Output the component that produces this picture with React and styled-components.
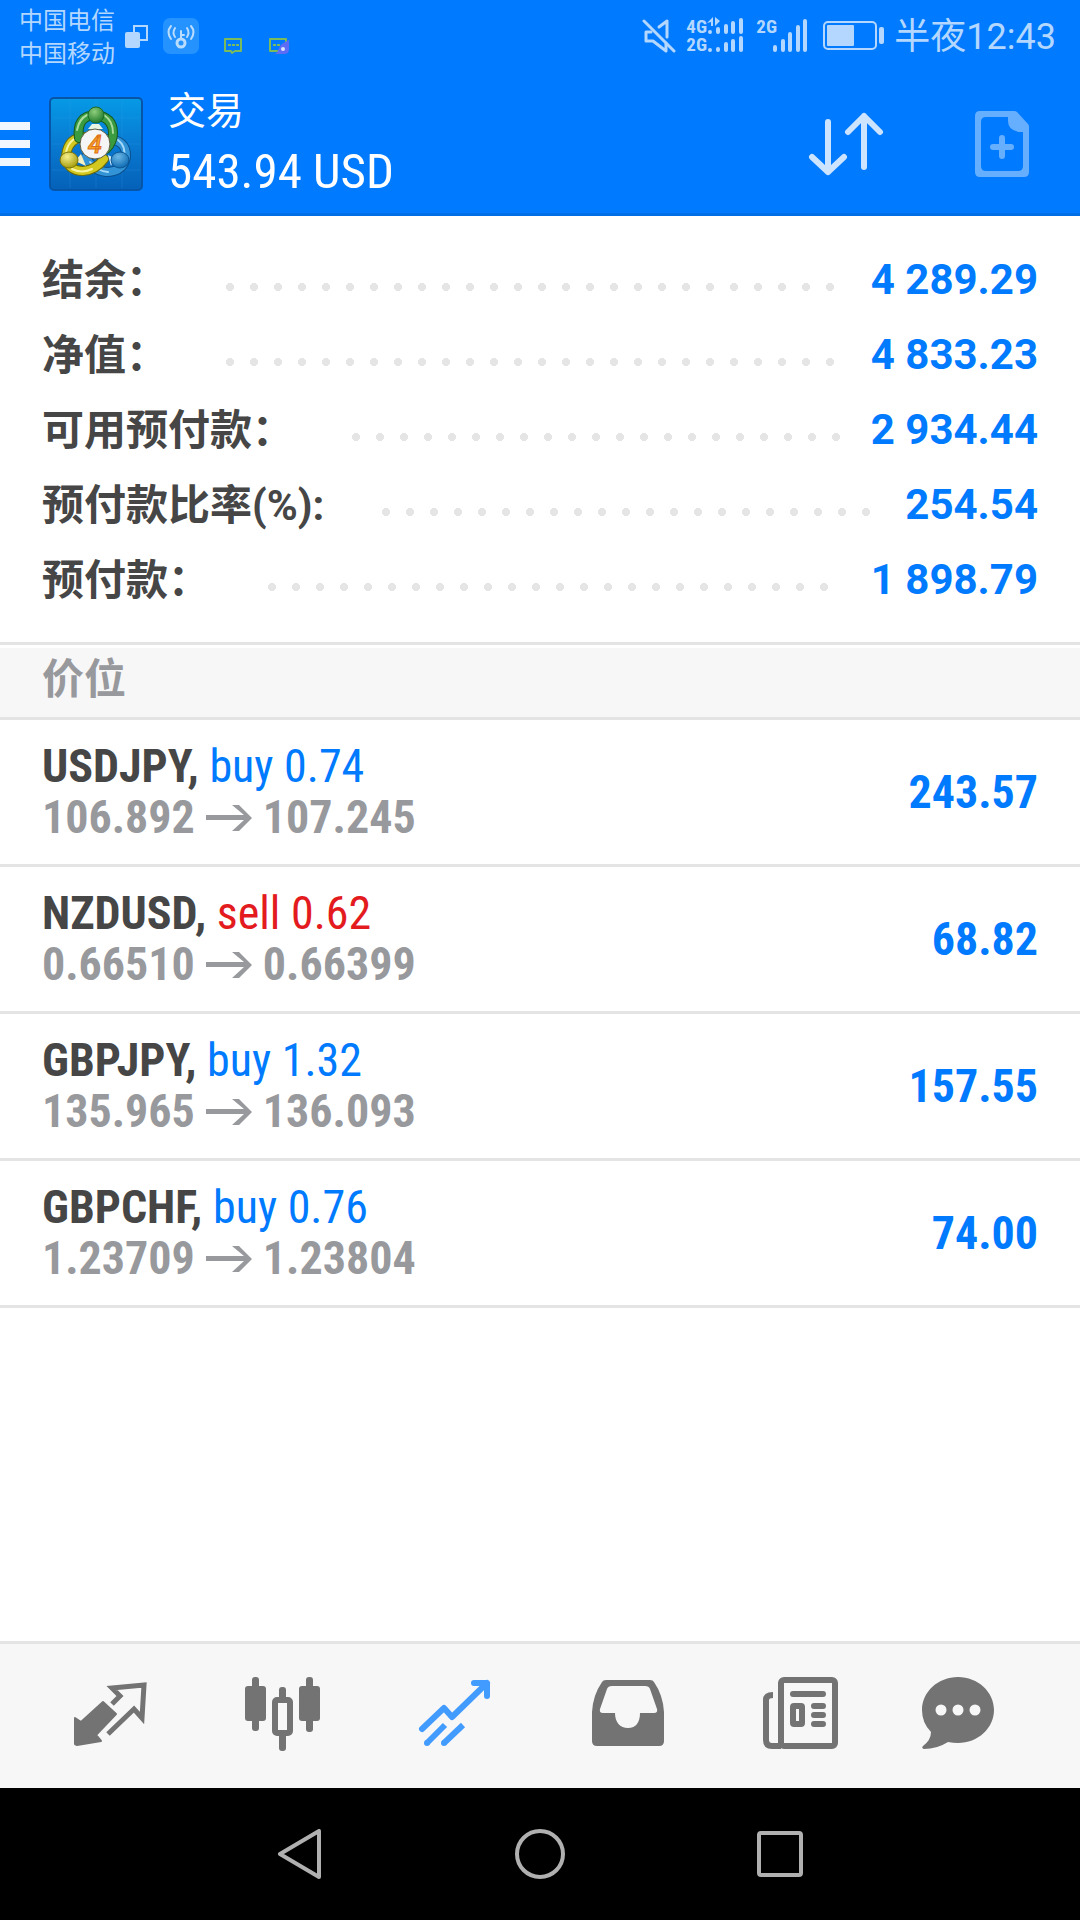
import styled, { createGlobalStyle } from "styled-components";

const GlobalStyle = createGlobalStyle`
  * {
    box-sizing: border-box;
  }

  body {
    margin: 0;
    background: #fff;
    font-family: Roboto, "Noto Sans CJK SC", sans-serif;
  }

  button {
    border: 0;
    padding: 0;
    background: none;
    font: inherit;
    color: inherit;
    cursor: pointer;
  }

  svg {
    display: block;
    flex: none;
  }
`;

const condensed = `"Roboto Condensed", "Liberation Sans Narrow", Roboto, "Noto Sans CJK SC", sans-serif`;

const Screen = styled.div`
  min-height: 100vh;
  display: flex;
  flex-direction: column;
`;

const TopArea = styled.header`
  background: #007aff;
  border-bottom: 3px solid #006ee6;
`;

const StatusBar = styled.div`
  height: 72px;
  display: flex;
  align-items: flex-start;
  justify-content: space-between;
  padding: 4px 24px 0 19px;
  color: #b3d7ff;
`;

const StatusGroup = styled.div`
  display: flex;
  align-items: flex-start;
`;

const Carriers = styled.div`
  margin-right: 8px;
  padding-top: 1px;
  font-size: 24px;
  line-height: 33px;
`;

const Network = styled.div`
  width: 21px;
  padding-top: 14px;
  font-family: ${condensed};
  font-size: 19px;
  font-weight: 700;
  line-height: 18px;
`;

const Clock = styled.time`
  margin-left: 10px;
  font-size: 36px;
  line-height: 67px;
`;

const Toolbar = styled.div`
  height: 141px;
  display: flex;
  align-items: center;
  padding-top: 2px;
`;

const MenuButton = styled.button`
  margin-right: 19px;
`;

const Heading = styled.div`
  flex: 1;
  margin-left: 25px;
  color: #fff;
`;

const Title = styled.h1`
  margin: 0;
  font-size: 38px;
  font-weight: 400;
  line-height: 56px;
`;

const Profit = styled.div`
  font-family: ${condensed};
  font-size: 49px;
  line-height: 66px;
`;

const ActionButton = styled.button`
  width: 156px;
  height: 100%;
  display: flex;
  align-items: center;
  justify-content: center;
`;

const Main = styled.main`
  flex: 1;
`;

const Summary = styled.dl`
  margin: 0;
  padding: 27px 42px 24px;
  border-bottom: 3px solid #e4e4e4;
`;

const SummaryRow = styled.div`
  height: 75px;
  display: flex;
  align-items: center;
  font-size: 42px;
  font-weight: 700;
  line-height: 60px;
`;

const Label = styled.dt`
  color: #464646;
`;

const Dots = styled.span`
  flex: 1;
  height: 8px;
  margin: 12px 29px 0 58px;
  background: radial-gradient(circle at 4px 4px, #e5e5e5 4px, transparent 4px) 0 0 / 24px 8px repeat-x;
`;

const Amount = styled.dd`
  margin: 0;
  padding-bottom: 2px;
  color: #007aff;
`;

const SectionTitle = styled.h2`
  margin: 3px 0 0;
  padding: 2px 42px 7px;
  background: #f7f7f7;
  border-bottom: 3px solid #e4e4e4;
  color: #98999d;
  font-size: 42px;
  font-weight: 700;
  line-height: 60px;
`;

const Positions = styled.ul`
  margin: 0;
  padding: 0;
  list-style: none;
  font-family: ${condensed};
  font-size: 46px;
  font-weight: 700;
  line-height: 51px;
`;

const Position = styled.li`
  height: 147px;
  display: flex;
  align-items: center;
  justify-content: space-between;
  padding: 0 42px;
  border-bottom: 3px solid #e4e4e4;
`;

const Instrument = styled.div`
  color: #464646;
`;

const Side = styled.span`
  font-weight: 400;
  color: ${(props) => (props.$side === "sell" ? "#e31b1e" : "#007aff")};
`;

const Prices = styled.div`
  display: flex;
  align-items: center;
  gap: 11px;
  color: #98999d;
`;

const Result = styled.div`
  color: #007aff;
`;

const TabBar = styled.nav`
  height: 147px;
  display: flex;
  padding: 0 50px 0 24px;
  background: #f7f7f7;
  border-top: 3px solid #e4e4e4;
`;

const Tab = styled.button`
  flex: ${(props) => (props.$last ? 5 : 6)};
  display: flex;
  align-items: center;
  justify-content: center;
  color: ${(props) => (props.$active ? "#429bff" : "#737373")};
`;

const SystemBar = styled.nav`
  height: 132px;
  display: flex;
  justify-content: center;
  background: #000;
  color: #b0b0b0;
`;

const SystemButton = styled.button`
  width: 240px;
  display: flex;
  align-items: center;
  justify-content: center;
`;

const summary = [
  { label: "结余：", value: "4 289.29" },
  { label: "净值：", value: "4 833.23" },
  { label: "可用预付款：", value: "2 934.44" },
  { label: "预付款比率(%):", value: "254.54" },
  { label: "预付款：", value: "1 898.79" },
];

const positions = [
  { symbol: "USDJPY", side: "buy", volume: "0.74", open: "106.892", current: "107.245", result: "243.57" },
  { symbol: "NZDUSD", side: "sell", volume: "0.62", open: "0.66510", current: "0.66399", result: "68.82" },
  { symbol: "GBPJPY", side: "buy", volume: "1.32", open: "135.965", current: "136.093", result: "157.55" },
  { symbol: "GBPCHF", side: "buy", volume: "0.76", open: "1.23709", current: "1.23804", result: "74.00" },
];

const NotificationIcons = () => (
  <svg width="168" height="64" viewBox="123 4 168 64">
    <path d="M134 32V26h13v14h-7" fill="none" stroke="#b3d7ff" strokeWidth="2" />
    <rect x="125" y="32" width="15" height="16" rx="2" fill="#b3d7ff" />
    <rect x="163" y="18" width="36" height="36" rx="7" fill="#2492ff" />
    <g fill="none" stroke="#b9dcff" strokeWidth="2" strokeLinecap="round">
      <circle cx="181" cy="43" r="4" strokeWidth="3" />
      <path d="M181 39V31M181 35h3" />
      <path d="M175 28q-3 5 0 9M187 28q3 5 0 9M171 26q-5 6 0 13M191 26q5 6 0 13" />
    </g>
    <g fill="none" stroke="#7abb5e" strokeWidth="2" strokeLinejoin="round">
      <path d="M225 39h16v12h-6l-3 2-1-2h-6z" />
      <path d="M270 39h16v12h-16z" />
      <path d="M228 45h11M273 45h8" strokeDasharray="3 1" />
    </g>
    <path d="M289 40V49q0 5-5 5h-9q3-2 4-6t10-8z" fill="#5c6cf5" />
    <circle cx="283" cy="49" r="2" fill="#dbe4ff" />
  </svg>
);

const MuteIcon = () => (
  <svg width="44" height="64" viewBox="643 4 44 64">
    <g fill="none" stroke="#b3d7ff" strokeWidth="3" strokeLinecap="round" strokeLinejoin="round">
      <path d="M645 21l30 30" />
      <path d="M652 32h-5v9h7l13 10v-8" />
      <path d="M660 27l8-6v16" />
    </g>
  </svg>
);

const DualSignalIcon = () => (
  <svg width="49" height="64" viewBox="708 4 49 64" fill="none" stroke="#b3d7ff" strokeWidth="4" strokeLinecap="round">
    <path d="M711 32v0M719 29v3M727 26v6M734 23v9M742 20v12M711 50v0M719 49v1M727 44v6M734 41v9M742 38v12" />
    <path d="M708 23l6-6v9h-2v-4zM716 17v9l5-5z" fill="#b3d7ff" stroke="none" />
  </svg>
);

const SignalIcon = () => (
  <svg width="46" height="64" viewBox="778 4 46 64" fill="none" stroke="#b3d7ff" strokeWidth="4" strokeLinecap="round" overflow="visible">
    <path d="M776 47v3M784 41v9M791 34v16M799 27v23M806 21v29" />
  </svg>
);

const BatteryIcon = () => (
  <svg width="61" height="64" viewBox="824 4 61 64">
    <rect x="825" y="22" width="52" height="27" rx="4" fill="none" stroke="#b3d7ff" strokeWidth="2" />
    <rect x="828" y="25" width="27" height="21" rx="1" fill="#b3d7ff" />
    <rect x="880" y="27" width="5" height="17" rx="2" fill="#b3d7ff" />
  </svg>
);

const MenuIcon = () => (
  <svg width="30" height="44" viewBox="0 0 30 44">
    <path d="M0 0h30v8H0zM0 18h30v8H0zM0 36h30v8H0z" fill="#f0f7ff" />
  </svg>
);

const AppLogo = () => (
  <svg width="94" height="94" viewBox="-1 -1 94 94">
    <defs>
      <linearGradient id="tile" x1="0" y1="0" x2="0" y2="1">
        <stop offset="0" stopColor="#069ae6" />
        <stop offset="0.55" stopColor="#0877cf" />
        <stop offset="1" stopColor="#0561b8" />
      </linearGradient>
      <radialGradient id="green" cx="0.4" cy="0.3" r="0.7">
        <stop offset="0" stopColor="#8fce7c" />
        <stop offset="1" stopColor="#217c2c" />
      </radialGradient>
      <radialGradient id="yellow" cx="0.4" cy="0.3" r="0.7">
        <stop offset="0" stopColor="#f6f08c" />
        <stop offset="1" stopColor="#a79d0e" />
      </radialGradient>
      <radialGradient id="blue" cx="0.4" cy="0.3" r="0.7">
        <stop offset="0" stopColor="#6cb8e6" />
        <stop offset="1" stopColor="#0f6cb4" />
      </radialGradient>
    </defs>
    <rect x="0" y="0" width="92" height="92" rx="4" fill="url(#tile)" stroke="#0655a8" strokeWidth="2" />
    <path d="M20 2v88M46 2v88M72 2v88M2 20h88M2 46h88M2 72h88" stroke="#3aa5ec" strokeOpacity="0.2" />
    <g fill="none" strokeLinecap="round">
      <path d="M55 41q22 0 21 18-3 15-20 15-15-2-20-15" stroke="#0a4f8c" strokeWidth="10" />
      <path d="M55 41q22 0 21 18-3 15-20 15-15-2-20-15" stroke="#3293d6" strokeWidth="8" />
      <path d="M68 42q8 6 6 17M40 64q7 9 18 10" stroke="#a4daf8" strokeWidth="2" />
      <path d="M36 39q-18 0-20 19 2 15 17 15 13-1 21-12" stroke="#6b6a0c" strokeWidth="10" />
      <path d="M36 39q-18 0-20 19 2 15 17 15 13-1 21-12" stroke="#d3c81f" strokeWidth="8" />
      <path d="M32 38q-14 3-16 17M22 71q10 5 20 0" stroke="#f8f3a0" strokeWidth="2" />
      <path d="M29 40q-3-22 16-23 18 2 18 18 0 9-7 16" stroke="#155a1e" strokeWidth="10" />
      <path d="M29 40q-3-22 16-23 18 2 18 18 0 9-7 16" stroke="#3b9b40" strokeWidth="8" />
      <path d="M27 32q2-11 10-15M54 17q9 6 9 18" stroke="#a9dc9c" strokeWidth="2" />
    </g>
    <path d="M38 31l4-5h7l4 5z" fill="#e8f5e2" />
    <path d="M25 63l6-7 5 12z" fill="#f3f0c4" />
    <path d="M58 57l6 3-3 8z" fill="#d7effc" />
    <circle cx="46" cy="17" r="8" fill="url(#green)" stroke="#1c6b26" />
    <ellipse cx="19" cy="62" rx="9" ry="8" fill="url(#yellow)" stroke="#79740f" />
    <ellipse cx="70" cy="62" rx="9" ry="8" fill="url(#blue)" stroke="#0d5592" />
    <circle cx="45" cy="46" r="15" fill="#f5f5f5" stroke="#5d5d40" />
    <text x="45" y="55" textAnchor="middle" fontFamily="Roboto, sans-serif" fontSize="25" fontStyle="italic" fontWeight="500" fill="#f5a623" stroke="#e0701c">4</text>
  </svg>
);

const SortIcon = () => (
  <svg width="76" height="64" viewBox="0 0 76 64" fill="none" stroke="#cce4ff" strokeWidth="6" strokeLinecap="round" strokeLinejoin="round">
    <path d="M20 10v50M4 45l16 15 16-15" />
    <path d="M56 55V4M40 20L56 4l16 16" />
  </svg>
);

const NewOrderIcon = () => (
  <svg width="54" height="66" viewBox="0 0 54 66">
    <path
      fill="#66afff"
      fillRule="evenodd"
      d="M5 0h34q2 0 3 1l11 12q1 1 1 3v45q0 5-5 5H5q-5 0-5-5V5q0-5 5-5zM11 6q-5 0-5 5v44q0 5 5 5h32q5 0 5-5V21h-4Q33 19 33 10V6z"
    />
    <path d="M27 27v18M18 36h18" stroke="#66afff" strokeWidth="6" strokeLinecap="round" />
  </svg>
);

const ArrowIcon = () => (
  <svg width="46" height="26" viewBox="0 0 46 26" fill="#98999d">
    <path d="M0 10h38L26 0h7l13 13-13 13h-7l12-11H0z" />
  </svg>
);

const TabIcon = ({ children }) => (
  <svg width="84" height="84" viewBox="0 0 84 84">
    {children}
  </svg>
);

const QuotesIcon = () => (
  <TabIcon>
    <path
      d="M7 44l6 4 22-20 13 12-20 21 5 6-24 4-2-1z"
      fill="currentColor"
      stroke="currentColor"
      strokeWidth="2"
      strokeLinejoin="round"
    />
    <path d="M44 30l8-8-8-8 32-3-2 33-8-9-26 25" fill="none" stroke="currentColor" strokeWidth="5" />
  </TabIcon>
);

const ChartIcon = () => (
  <TabIcon>
    <g fill="currentColor">
      <rect x="4" y="12" width="21" height="35" rx="3" />
      <rect x="11" y="3" width="7" height="54" rx="3" />
      <rect x="38" y="13" width="7" height="16" rx="3" />
      <rect x="38" y="58" width="7" height="19" rx="3" />
      <rect x="58" y="12" width="21" height="35" rx="3" />
      <rect x="65" y="3" width="7" height="55" rx="3" />
    </g>
    <rect x="34" y="26" width="15" height="33" rx="2" fill="none" stroke="currentColor" strokeWidth="6" />
  </TabIcon>
);

const TradeIcon = () => (
  <TabIcon>
    <g fill="none" stroke="currentColor" strokeWidth="6" strokeLinejoin="round">
      <path d="M9 55l22-21 8 9L74 9M61 9h13v13" strokeLinecap="round" />
      <path d="M14 69l18-18M31 69l19-18" />
    </g>
    <circle cx="14" cy="69" r="3" fill="currentColor" />
    <circle cx="31" cy="69" r="3" fill="currentColor" />
  </TabIcon>
);

const HistoryIcon = () => (
  <TabIcon>
    <path
      fill="currentColor"
      fillRule="evenodd"
      d="M20 6h44q3 0 4 2 9 13 10 30v29q0 5-5 5H11q-5 0-5-5V38Q7 21 16 8q1-2 4-2zM26 12q-4 0-5 3l-7 20q-1 4 3 4h12c0 9 5 15 13 15s12-6 12-15h14q4 0 3-4l-7-20q-1-3-5-3z"
    />
  </TabIcon>
);

const NewsIcon = () => (
  <TabIcon>
    <g fill="none" stroke="currentColor" strokeWidth="6">
      <rect x="23" y="6" width="54" height="66" rx="3" />
      <path d="M15 21q-7 0-7 5v40q0 6 6 6h9" />
      <rect x="35" y="32" width="9" height="18" rx="1" />
      <path d="M35 20h30M56 32h9M56 41h9M56 50h9" strokeLinecap="round" />
    </g>
  </TabIcon>
);

const ChatIcon = () => (
  <TabIcon>
    <path
      fill="currentColor"
      d="M42 3c20 0 36 15 36 33S62 69 42 69q-5 0-10-1-11 7-24 7-3-1-1-3 8-6 8-14-9-9-9-22C6 18 22 3 42 3z"
    />
    <g fill="#f7f7f7">
      <circle cx="25" cy="36" r="5.5" />
      <circle cx="42" cy="36" r="5.5" />
      <circle cx="59" cy="36" r="5.5" />
    </g>
  </TabIcon>
);

const tabs = [
  { name: "行情", Icon: QuotesIcon },
  { name: "图表", Icon: ChartIcon },
  { name: "交易", Icon: TradeIcon, active: true },
  { name: "历史", Icon: HistoryIcon },
  { name: "新闻", Icon: NewsIcon },
  { name: "聊天", Icon: ChatIcon, last: true },
];

const App = () => {
  return (
    <Screen>
      <GlobalStyle />
      <TopArea>
        <StatusBar>
          <StatusGroup>
            <Carriers>
              <div>中国电信</div>
              <div>中国移动</div>
            </Carriers>
            <NotificationIcons />
          </StatusGroup>
          <StatusGroup>
            <MuteIcon />
            <Network>
              <div>4G</div>
              <div>2G</div>
            </Network>
            <DualSignalIcon />
            <Network>2G</Network>
            <SignalIcon />
            <BatteryIcon />
            <Clock>半夜12:43</Clock>
          </StatusGroup>
        </StatusBar>
        <Toolbar>
          <MenuButton aria-label="菜单">
            <MenuIcon />
          </MenuButton>
          <AppLogo />
          <Heading>
            <Title>交易</Title>
            <Profit>543.94 USD</Profit>
          </Heading>
          <ActionButton aria-label="排序">
            <SortIcon />
          </ActionButton>
          <ActionButton aria-label="新订单">
            <NewOrderIcon />
          </ActionButton>
        </Toolbar>
      </TopArea>
      <Main>
        <Summary>
          {summary.map((item) => (
            <SummaryRow key={item.label}>
              <Label>{item.label}</Label>
              <Dots />
              <Amount>{item.value}</Amount>
            </SummaryRow>
          ))}
        </Summary>
        <SectionTitle>价位</SectionTitle>
        <Positions>
          {positions.map((item) => (
            <Position key={item.symbol}>
              <div>
                <Instrument>
                  {item.symbol}, <Side $side={item.side}>{item.side} {item.volume}</Side>
                </Instrument>
                <Prices>
                  <span>{item.open}</span>
                  <ArrowIcon />
                  <span>{item.current}</span>
                </Prices>
              </div>
              <Result>{item.result}</Result>
            </Position>
          ))}
        </Positions>
      </Main>
      <TabBar>
        {tabs.map(({ name, Icon, active, last }) => (
          <Tab key={name} aria-label={name} $active={active} $last={last}>
            <Icon />
          </Tab>
        ))}
      </TabBar>
      <SystemBar>
        <SystemButton aria-label="返回">
          <svg width="50" height="50" viewBox="0 0 50 50" fill="none" stroke="currentColor" strokeWidth="4" strokeLinejoin="round">
            <path d="M5 25L44 2v46z" />
          </svg>
        </SystemButton>
        <SystemButton aria-label="主屏幕">
          <svg width="50" height="50" viewBox="0 0 50 50" fill="none" stroke="currentColor" strokeWidth="4">
            <circle cx="25" cy="25" r="23" />
          </svg>
        </SystemButton>
        <SystemButton aria-label="最近任务">
          <svg width="50" height="50" viewBox="0 0 50 50" fill="none" stroke="currentColor" strokeWidth="4">
            <rect x="4" y="4" width="42" height="42" rx="2" />
          </svg>
        </SystemButton>
      </SystemBar>
    </Screen>
  );
};

export default App;
